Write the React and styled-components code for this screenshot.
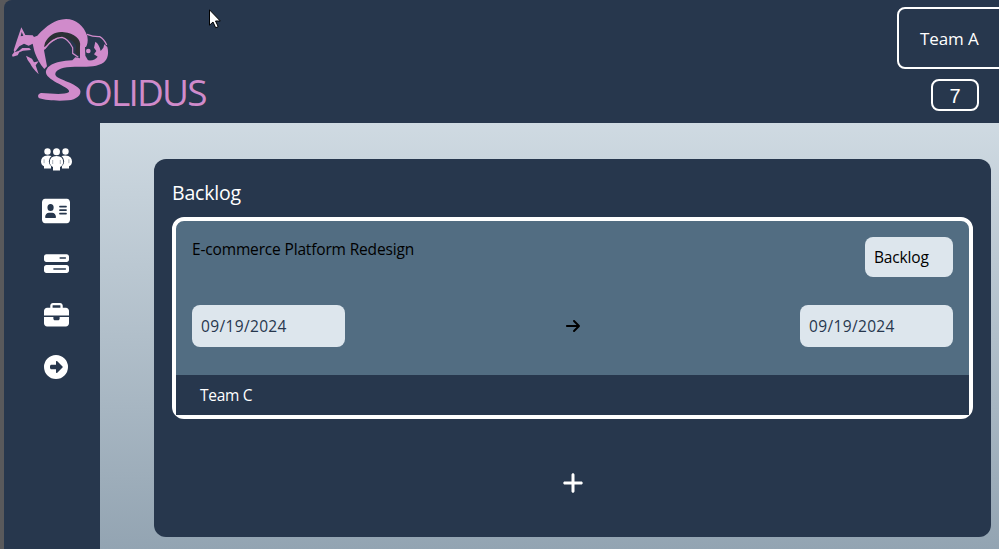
import React from 'react';
import styled, { createGlobalStyle } from 'styled-components';
import { FaAddressCard, FaBarsProgress, FaBriefcase, FaCircleRight, FaArrowRight, FaPlus } from 'react-icons/fa6';

const navy = '#27374d';
const slate = '#526d82';
const mist = '#dde6ed';
const orchid = '#d08bcb';

const GlobalStyle = createGlobalStyle`
  * { box-sizing: border-box; }
  body { margin: 0; overflow: hidden; background: #59595b; font: 16px/24px "Open Sans", "Noto Sans", sans-serif; }
`;

const Page = styled.div`
  height: 549px;
  margin-left: 4px;
  display: flex;
  flex-direction: column;
  overflow: hidden;
  background: ${navy};
  border-top-left-radius: 8px;
`;

const Header = styled.header`
  flex: none;
  height: 123px;
  display: flex;
  justify-content: space-between;
  position: relative;
`;

const Brand = styled.div`
  display: flex;
  color: ${orchid};
`;

const BrandMark = styled.svg`
  width: 112px;
  height: 123px;
  flex: none;
`;

const BrandName = styled.div`
  margin: 69px 0 0 -32px;
  font-size: 37px;
  line-height: 46px;
  letter-spacing: -1.8px;
`;

const HeaderControls = styled.div`
  width: 102px;
  padding-top: 7px;
`;

const TeamSelect = styled.div`
  width: 150px;
  height: 62px;
  padding: 18px 21px;
  border: 2px solid #fff;
  border-radius: 8px;
  color: #fff;
  font-size: 17px;
  letter-spacing: -0.1px;
`;

const Counter = styled.div`
  width: 48px;
  height: 32px;
  margin: 10px 0 0 34px;
  border: 2px solid #fff;
  border-radius: 8px;
  color: #fff;
  text-align: center;
  font: 20px/31px "Liberation Sans", sans-serif;
`;

const Pointer = styled.svg`
  position: absolute;
  left: 205px;
  top: 9px;
  width: 12px;
  height: 20px;
`;

const Body = styled.div`
  flex: 1;
  display: flex;
  min-height: 0;
`;

const Sidebar = styled.nav`
  width: 96px;
  flex: none;
  padding: 22px 0 0 8px;
  display: flex;
  flex-direction: column;
  align-items: center;
  gap: 24px;
  color: #fff;
`;

const NavItem = styled.a`
  height: 28px;
  display: grid;
  place-items: center;
  font-size: ${(p) => p.$size || 24}px;
`;

const Main = styled.main`
  flex: 1;
  padding: 36px 8px 12px 54px;
  background: linear-gradient(#cfdae2, #93a4b2);
`;

const Column = styled.section`
  height: 378px;
  padding: 18px;
  border-radius: 12px;
  background: ${navy};
`;

const ColumnTitle = styled.h2`
  height: 40px;
  margin: 0;
  color: #fff;
  font-size: 19.5px;
  font-weight: 400;
  line-height: 31px;
  letter-spacing: -0.2px;
`;

const Card = styled.article`
  height: 202px;
  border: 4px solid #fff;
  border-radius: 12px;
  background: ${slate};
`;

const CardTop = styled.div`
  height: 84px;
  padding: 16px 16px 0;
  display: flex;
  justify-content: space-between;
`;

const CardTitle = styled.div`
  color: #000;
  font-size: 15.5px;
  line-height: 25px;
  letter-spacing: -0.16px;
`;

const Field = styled.div`
  width: ${(p) => p.$width}px;
  height: ${(p) => p.$height}px;
  padding-left: 9px;
  border-radius: 8px;
  background: ${mist};
  color: ${(p) => p.$color};
  font-size: 15.5px;
  line-height: ${(p) => p.$height + 1}px;
  letter-spacing: ${(p) => p.$spacing || 0}px;
`;

const DateRow = styled.div`
  height: 70px;
  padding: 0 16px;
  display: flex;
  justify-content: space-between;
`;

const Arrow = styled.div`
  height: 42px;
  display: flex;
  align-items: center;
  font-size: 16px;
`;

const CardTeam = styled.div`
  height: 40px;
  padding-left: 24px;
  background: ${navy};
  color: #fff;
  font-size: 15.5px;
  line-height: 41px;
  letter-spacing: -0.3px;
`;

const AddButton = styled.div`
  height: 128px;
  display: grid;
  place-items: center;
  color: #fff;
  font-size: 24px;
`;

function Logo() {
  return (
    <BrandMark viewBox="12 0 336 369" fill="currentColor">
      <g transform="translate(24 45)">
        <path d="M88 62C115 32 142 13 174 12C204 12 228 32 238 64C241 80 238 91 232 100L232 122L240 136C254 138 263 132 269 125L258 118L265 108L258 98L262 80Q274 88 278 108L286 98L289 88L298 96C303 114 300 131 288 142C264 160 223 154 187 156C158 158 141 166 142 179C145 193 199 201 216 224C223 239 204 254 181 256C149 259 114 256 94 250C88 245 89 236 100 234C133 236 169 240 183 231C191 218 118 198 114 174C113 155 135 139 193 136L202 127L216 130L216 112L213 90C202 68 184 63 164 66C138 73 121 88 108 106L117 154L109 162C98 150 85 128 79 108L74 86L62 92L48 86L34 94L27 103L20 112L33 107L43 99L64 99L69 105L45 107L34 112L29 121L14 125L12 120L19 111L17 106L26 78L40 37L52 60L74 61L78 66Z" />
        <path d="M41 51L46 62L38 64Z" fill={navy} />
        <path d="M54 122L72 131L78 142L92 139L83 151L92 178Q72 158 67 146Q58 137 54 122Z" />
        <path d="M111 83C124 60 144 48 168 52C198 55 221 72 216 95L215 121L208 120L202 110L205 94C198 77 182 70 162 69C144 67 127 78 113 94L108 96Z" fill="#2b3035" />
        <path d="M110 102C127 77 145 67 162 67C177 71 187 84 194 98L194 115L211 127" fill="none" stroke="currentColor" strokeWidth="3.5" />
        <path d="M231 96Q245 94 251 108Q248 124 234 120Z" fill={navy} />
        <circle cx="241" cy="108" r="7" />
        <path d="M237 58Q256 66 275 65Q288 72 296 90" fill="none" stroke="currentColor" strokeWidth="4" />
      </g>
    </BrandMark>
  );
}

function PeopleIcon() {
  return (
    <svg width="31" height="23" viewBox="0 0 31 23" fill="currentColor">
      <circle cx="6.5" cy="3.5" r="3.2" />
      <circle cx="24.5" cy="3.5" r="3.2" />
      <path d="M6.5 7.4Q0 8 0 13.5Q0 17 3 18.2V20.6H10V18Q7.8 16 7.8 13.3Q8 10 10.5 8.1Q8.7 7.3 6.5 7.4ZM24.5 7.4Q31 8 31 13.5Q31 17 28 18.2V20.6H21V18Q23.2 16 23.2 13.3Q23 10 20.5 8.1Q22.3 7.3 24.5 7.4Z" />
      <circle cx="15.5" cy="3.7" r="3.5" />
      <path d="M15.5 8Q8.8 8.2 8.8 14Q9 17.5 12 19V22.4H19V19Q22 17.5 22.2 14Q22.2 8.2 15.5 8Z" />
      <path d="M3.1 11.3V15.2M27.9 11.3V15.2M11.7 12V16M19.3 12V16" stroke={navy} strokeWidth=".4" />
    </svg>
  );
}

export default function App() {
  return (
    <>
      <GlobalStyle />
      <Page>
        <Header>
          <Brand>
            <Logo />
            <BrandName>OLIDUS</BrandName>
          </Brand>
          <HeaderControls>
            <TeamSelect>Team A</TeamSelect>
            <Counter>7</Counter>
          </HeaderControls>
          <Pointer viewBox="0 0 12 20">
            <path d="M.5.8V16.2L4 13L6.7 18.8L9.2 17.6L6.5 12H11.3Z" fill="#fff" stroke="#000" />
          </Pointer>
        </Header>
        <Body>
          <Sidebar>
            <NavItem><PeopleIcon /></NavItem>
            <NavItem $size={28}><FaAddressCard preserveAspectRatio="none" width="28" height="25" /></NavItem>
            <NavItem $size={25}><FaBarsProgress /></NavItem>
            <NavItem $size={25}><FaBriefcase /></NavItem>
            <NavItem><FaCircleRight /></NavItem>
          </Sidebar>
          <Main>
            <Column>
              <ColumnTitle>Backlog</ColumnTitle>
              <Card>
                <CardTop>
                  <CardTitle>E-commerce Platform Redesign</CardTitle>
                  <Field $width={88} $height={40} $color="#000" $spacing={-0.15}>Backlog</Field>
                </CardTop>
                <DateRow>
                  <Field $width={153} $height={42} $color={navy} $spacing={0.35}>09/19/2024</Field>
                  <Arrow><FaArrowRight /></Arrow>
                  <Field $width={153} $height={42} $color={navy} $spacing={0.35}>09/19/2024</Field>
                </DateRow>
                <CardTeam>Team C</CardTeam>
              </Card>
              <AddButton><FaPlus /></AddButton>
            </Column>
          </Main>
        </Body>
      </Page>
    </>
  );
}
